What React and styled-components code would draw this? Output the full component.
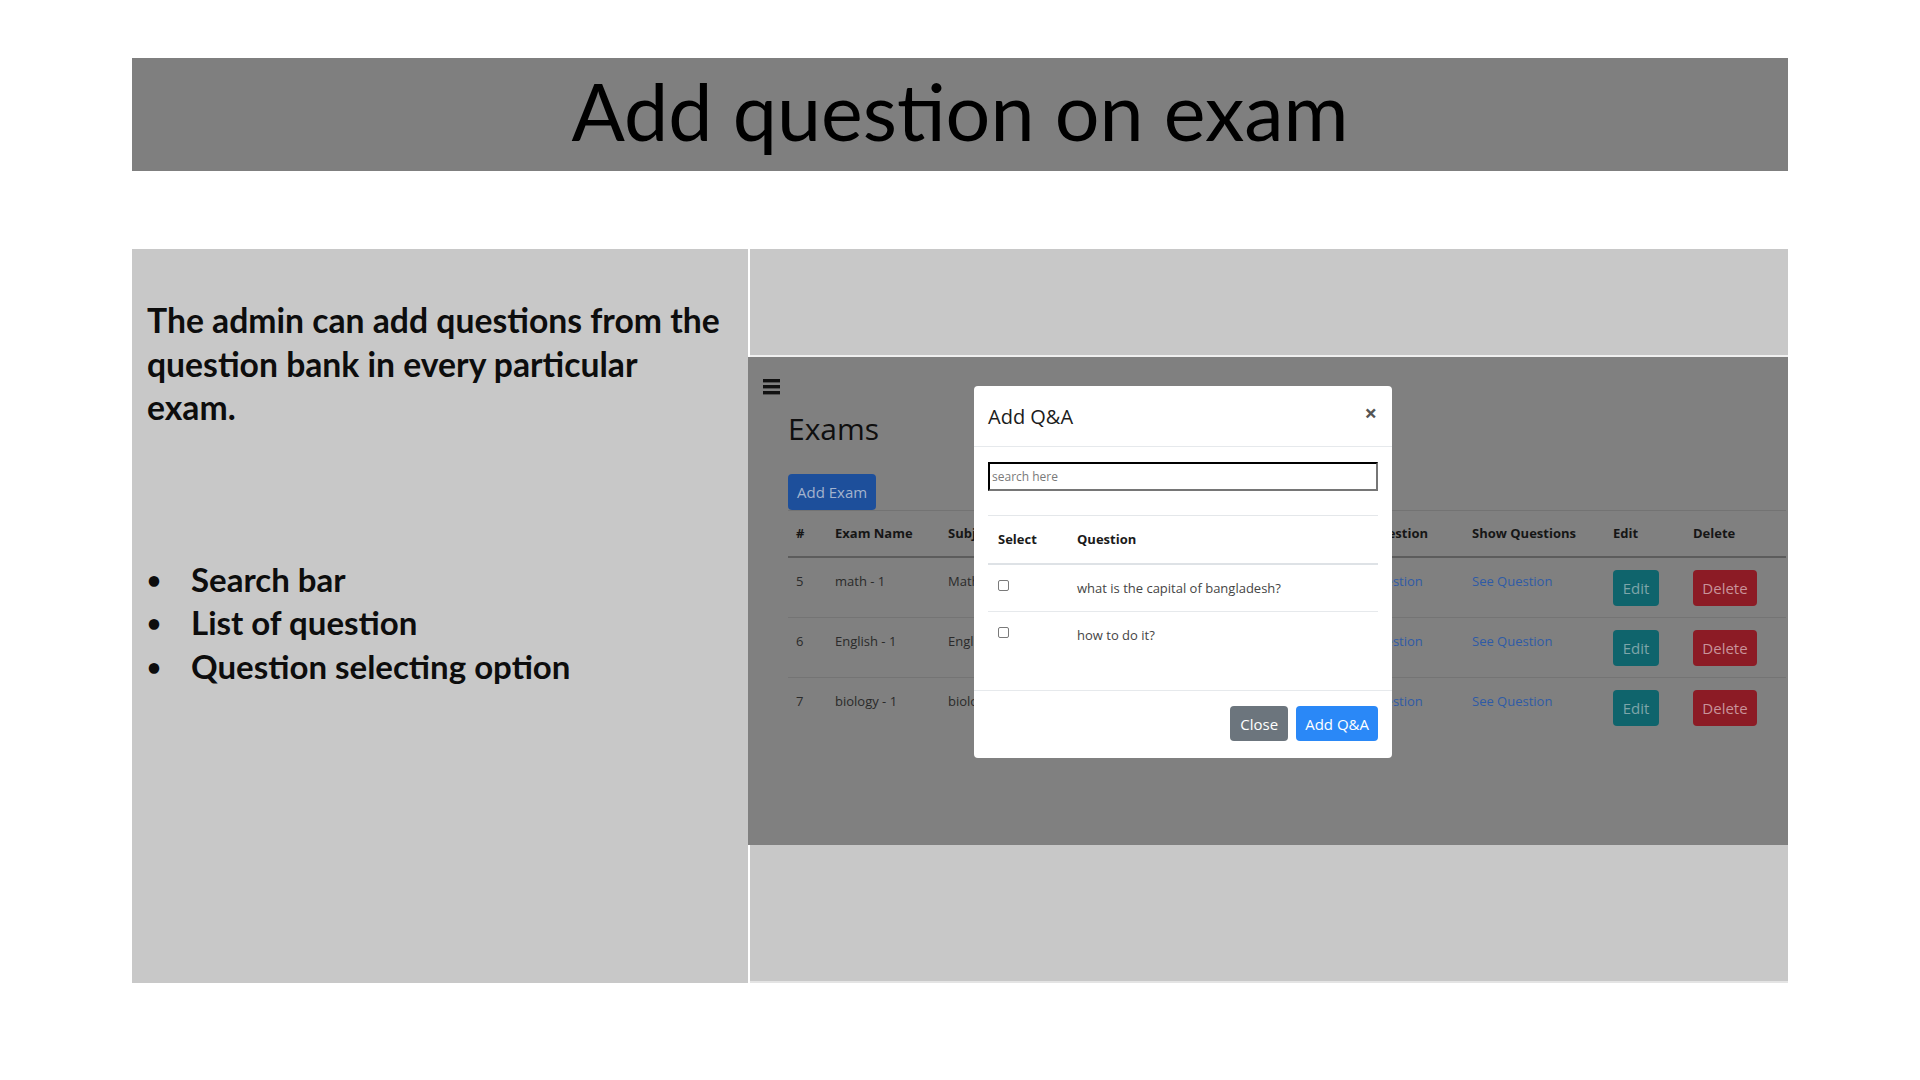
import React from 'react';
import styled, { createGlobalStyle } from 'styled-components';

const GlobalStyle = createGlobalStyle`
  html, body {
    margin: 0;
    padding: 0;
    background: #ffffff;
  }
  * {
    box-sizing: border-box;
  }
`;

const Slide = styled.div`
  width: 1920px;
  height: 1080px;
  padding: 58px 132px 0 132px;
  background: #ffffff;
  font-family: Lato, "Liberation Sans", sans-serif;
`;

const TitleBar = styled.header`
  height: 113px;
  background: #7f7f7f;
  display: flex;
  align-items: center;
  justify-content: center;
  padding-bottom: 8px;
`;

const Title = styled.h1`
  margin: 0;
  font-family: Lato, "Liberation Sans", sans-serif;
  font-weight: 400;
  font-size: 79px;
  line-height: 1;
  color: #000;
`;

const Content = styled.main`
  margin-top: 78px;
  height: 734px;
  display: flex;
  gap: 2px;
`;

const TextPanel = styled.section`
  width: 616px;
  background: #c8c8c8;
  padding: 50px 0 0 15px;
`;

const Lead = styled.p`
  margin: 0;
  max-width: 580px;
  font-weight: 700;
  font-size: 33.7px;
  line-height: 43.6px;
  color: #0d0d0d;
`;

const Bullets = styled.ul`
  list-style: none;
  margin: 128px 0 0 0;
  padding: 0;
`;

const Bullet = styled.li`
  display: flex;
  align-items: center;
  font-weight: 700;
  font-size: 33px;
  line-height: 43.6px;
  color: #0d0d0d;

  &::before {
    content: '•';
    width: 44px;
    padding-left: 0;
    font-size: 24px;
  }
`;

const ShotPanel = styled.section`
  flex: 1;
  background: #c8c8c8;
  display: flex;
  flex-direction: column;
  border-bottom: 2px solid #e4e4e4;
`;

const ShotTop = styled.div`
  height: 108px;
  border-bottom: 2px solid #f0f0f0;
`;

const Screen = styled.div`
  position: relative;
  height: 488px;
  margin-left: -2px;
  background: #808080;
  font-family: "Open Sans", "Noto Sans", sans-serif;
  color: #151515;
  overflow: hidden;
`;

const Menu = styled.div`
  padding: 21px 0 0 15px;
  height: 38px;
`;

const Heading = styled.h2`
  margin: 14px 0 0 40px;
  font-weight: 400;
  font-size: 30px;
  line-height: 40px;
  color: #0f0f0f;
`;

const ActionButton = styled.button`
  display: inline-flex;
  align-items: center;
  justify-content: center;
  height: 36px;
  padding: 0 ${(p) => p.$pad || 0}px;
  border: none;
  border-radius: 4px;
  font-family: "Open Sans", "Noto Sans", sans-serif;
  font-size: 15px;
  background: ${(p) => p.$bg};
  color: ${(p) => p.$fg};
`;

const AddExamWrap = styled.div`
  margin: 25px 0 0 40px;
`;

const Table = styled.table`
  margin: 0 0 0 40px;
  width: 998px;
  border-collapse: collapse;
  table-layout: fixed;
  font-size: 13px;
  line-height: 22px;
  border-top: 1px solid #737373;
`;

const HeadCell = styled.th`
  text-align: left;
  font-weight: 700;
  padding: 11px 0 12px ${(p) => (p.$first ? 8 : 0)}px;
  color: #161616;
  border-bottom: 2px solid #5c5c5c;
  white-space: nowrap;
`;

const Cell = styled.td`
  padding: 12px 0 11px ${(p) => (p.$first ? 8 : 0)}px;
  vertical-align: top;
  color: #2a2a2a;
  white-space: nowrap;
  border-bottom: 1px solid ${(p) => (p.$last ? 'transparent' : '#747474')};
`;

const Link = styled.span`
  color: #2f5ba6;
`;

const Modal = styled.div`
  position: absolute;
  left: 226px;
  top: 29px;
  width: 418px;
  height: 372px;
  background: #ffffff;
  border-radius: 4px;
  display: flex;
  flex-direction: column;
  color: #212529;
`;

const ModalHeader = styled.div`
  height: 61px;
  display: flex;
  align-items: center;
  justify-content: space-between;
  padding: 0 15px 0 14px;
  border-bottom: 1px solid #e6e9ec;
`;

const ModalTitle = styled.h3`
  margin: 0;
  font-weight: 400;
  font-size: 20px;
  color: #1c1c1c;
`;

const CloseX = styled.span`
  font-size: 22px;
  font-weight: 700;
  line-height: 1;
  color: #555;
  margin-top: -8px;
`;

const ModalBody = styled.div`
  flex: 1;
  padding: 15px 14px 0 14px;
`;

const Search = styled.input`
  display: block;
  width: 390px;
  height: 29px;
  padding: 0 2px;
  border: 2px inset #767676;
  border-top-color: #1e1e1e;
  border-left-color: #1e1e1e;
  font-family: "Open Sans", "Noto Sans", sans-serif;
  font-size: 12px;
  color: #222;
  outline: none;

  &::placeholder {
    color: #7a7a7a;
  }
`;

const QaTable = styled.table`
  margin-top: 24px;
  width: 100%;
  border-collapse: collapse;
  table-layout: fixed;
  font-size: 13px;
  line-height: 22px;
  border-top: 1px solid #e4e7ea;
`;

const QaHead = styled.th`
  text-align: left;
  font-weight: 700;
  padding: 12px 10px;
  height: 48px;
  border-bottom: 2px solid #dee2e6;
  color: #1a1a1a;
`;

const QaCell = styled.td`
  padding: 12px 10px;
  vertical-align: top;
  color: #454545;
  border-bottom: 1px solid ${(p) => (p.$last ? 'transparent' : '#e6e9ec')};
`;

const Check = styled.span`
  display: block;
  margin-top: 3px;
  width: 11px;
  height: 11px;
  border: 1px solid #7a7a7a;
  border-radius: 2px;
  background: #fff;
`;

const ModalFooter = styled.div`
  height: 68px;
  border-top: 1px solid #e6e9ec;
  display: flex;
  justify-content: flex-end;
  align-items: flex-start;
  gap: 8px;
  padding: 15px 14px 0 0;
`;

const ModalButton = styled.button`
  height: 35px;
  padding: 0 ${(p) => p.$pad}px;
  border: none;
  border-radius: 4px;
  font-family: "Open Sans", "Noto Sans", sans-serif;
  font-size: 15px;
  color: #ffffff;
  background: ${(p) => p.$bg};
`;

const Hamburger = () => (
  <svg width="17" height="17" viewBox="0 0 17 17">
    <rect x="0" y="1" width="17" height="3.4" fill="#111" />
    <rect x="0" y="7" width="17" height="3.4" fill="#111" />
    <rect x="0" y="13" width="17" height="3.4" fill="#111" />
  </svg>
);

const columns = [47, 113, 200, 192, 132, 141, 80, 93];

const exams = [
  { id: 5, name: 'math - 1', subject: 'Math' },
  { id: 6, name: 'English - 1', subject: 'English' },
  { id: 7, name: 'biology - 1', subject: 'biology' },
];

const questions = ['what is the capital of bangladesh?', 'how to do it?'];

const App = () => {
  return (
    <>
      <GlobalStyle />
      <Slide>
        <TitleBar>
          <Title>Add question on exam</Title>
        </TitleBar>
        <Content>
          <TextPanel>
            <Lead>
              The admin can add questions from the question bank in every particular exam.
            </Lead>
            <Bullets>
              <Bullet>Search bar</Bullet>
              <Bullet>List of question</Bullet>
              <Bullet>Question selecting option</Bullet>
            </Bullets>
          </TextPanel>
          <ShotPanel>
            <ShotTop />
            <Screen>
              <Menu>
                <Hamburger />
              </Menu>
              <Heading>Exams</Heading>
              <AddExamWrap>
                <ActionButton $bg="#1d4f9b" $fg="#a3b3cd" $pad={9}>
                  Add Exam
                </ActionButton>
              </AddExamWrap>
              <Table>
                <colgroup>
                  {columns.map((w, i) => (
                    <col key={i} style={{ width: w }} />
                  ))}
                </colgroup>
                <thead>
                  <tr>
                    <HeadCell $first>#</HeadCell>
                    <HeadCell>Exam Name</HeadCell>
                    <HeadCell>Subject</HeadCell>
                    <HeadCell />
                    <HeadCell>Add Question</HeadCell>
                    <HeadCell>Show Questions</HeadCell>
                    <HeadCell>Edit</HeadCell>
                    <HeadCell>Delete</HeadCell>
                  </tr>
                </thead>
                <tbody>
                  {exams.map((e, i) => {
                    const last = i === exams.length - 1;
                    return (
                      <tr key={e.id}>
                        <Cell $first $last={last}>{e.id}</Cell>
                        <Cell $last={last}>{e.name}</Cell>
                        <Cell $last={last}>{e.subject}</Cell>
                        <Cell $last={last} />
                        <Cell $last={last}>
                          <Link>Add Question</Link>
                        </Cell>
                        <Cell $last={last}>
                          <Link>See Question</Link>
                        </Cell>
                        <Cell $last={last}>
                          <ActionButton $bg="#0f646c" $fg="#7ea5a9" style={{ width: 46 }}>
                            Edit
                          </ActionButton>
                        </Cell>
                        <Cell $last={last}>
                          <ActionButton $bg="#8c1b25" $fg="#c8939a" style={{ width: 64 }}>
                            Delete
                          </ActionButton>
                        </Cell>
                      </tr>
                    );
                  })}
                </tbody>
              </Table>

              <Modal>
                <ModalHeader>
                  <ModalTitle>Add Q&amp;A</ModalTitle>
                  <CloseX>×</CloseX>
                </ModalHeader>
                <ModalBody>
                  <Search placeholder="search here" />
                  <QaTable>
                    <colgroup>
                      <col style={{ width: 79 }} />
                      <col />
                    </colgroup>
                    <thead>
                      <tr>
                        <QaHead>Select</QaHead>
                        <QaHead>Question</QaHead>
                      </tr>
                    </thead>
                    <tbody>
                      {questions.map((q, i) => (
                        <tr key={q}>
                          <QaCell $last={i === questions.length - 1}>
                            <Check />
                          </QaCell>
                          <QaCell $last={i === questions.length - 1}>{q}</QaCell>
                        </tr>
                      ))}
                    </tbody>
                  </QaTable>
                </ModalBody>
                <ModalFooter>
                  <ModalButton $bg="#6c757d" $pad={10}>Close</ModalButton>
                  <ModalButton $bg="#2a88f7" $pad={9}>Add Q&amp;A</ModalButton>
                </ModalFooter>
              </Modal>
            </Screen>
          </ShotPanel>
        </Content>
      </Slide>
    </>
  );
};

export default App;
